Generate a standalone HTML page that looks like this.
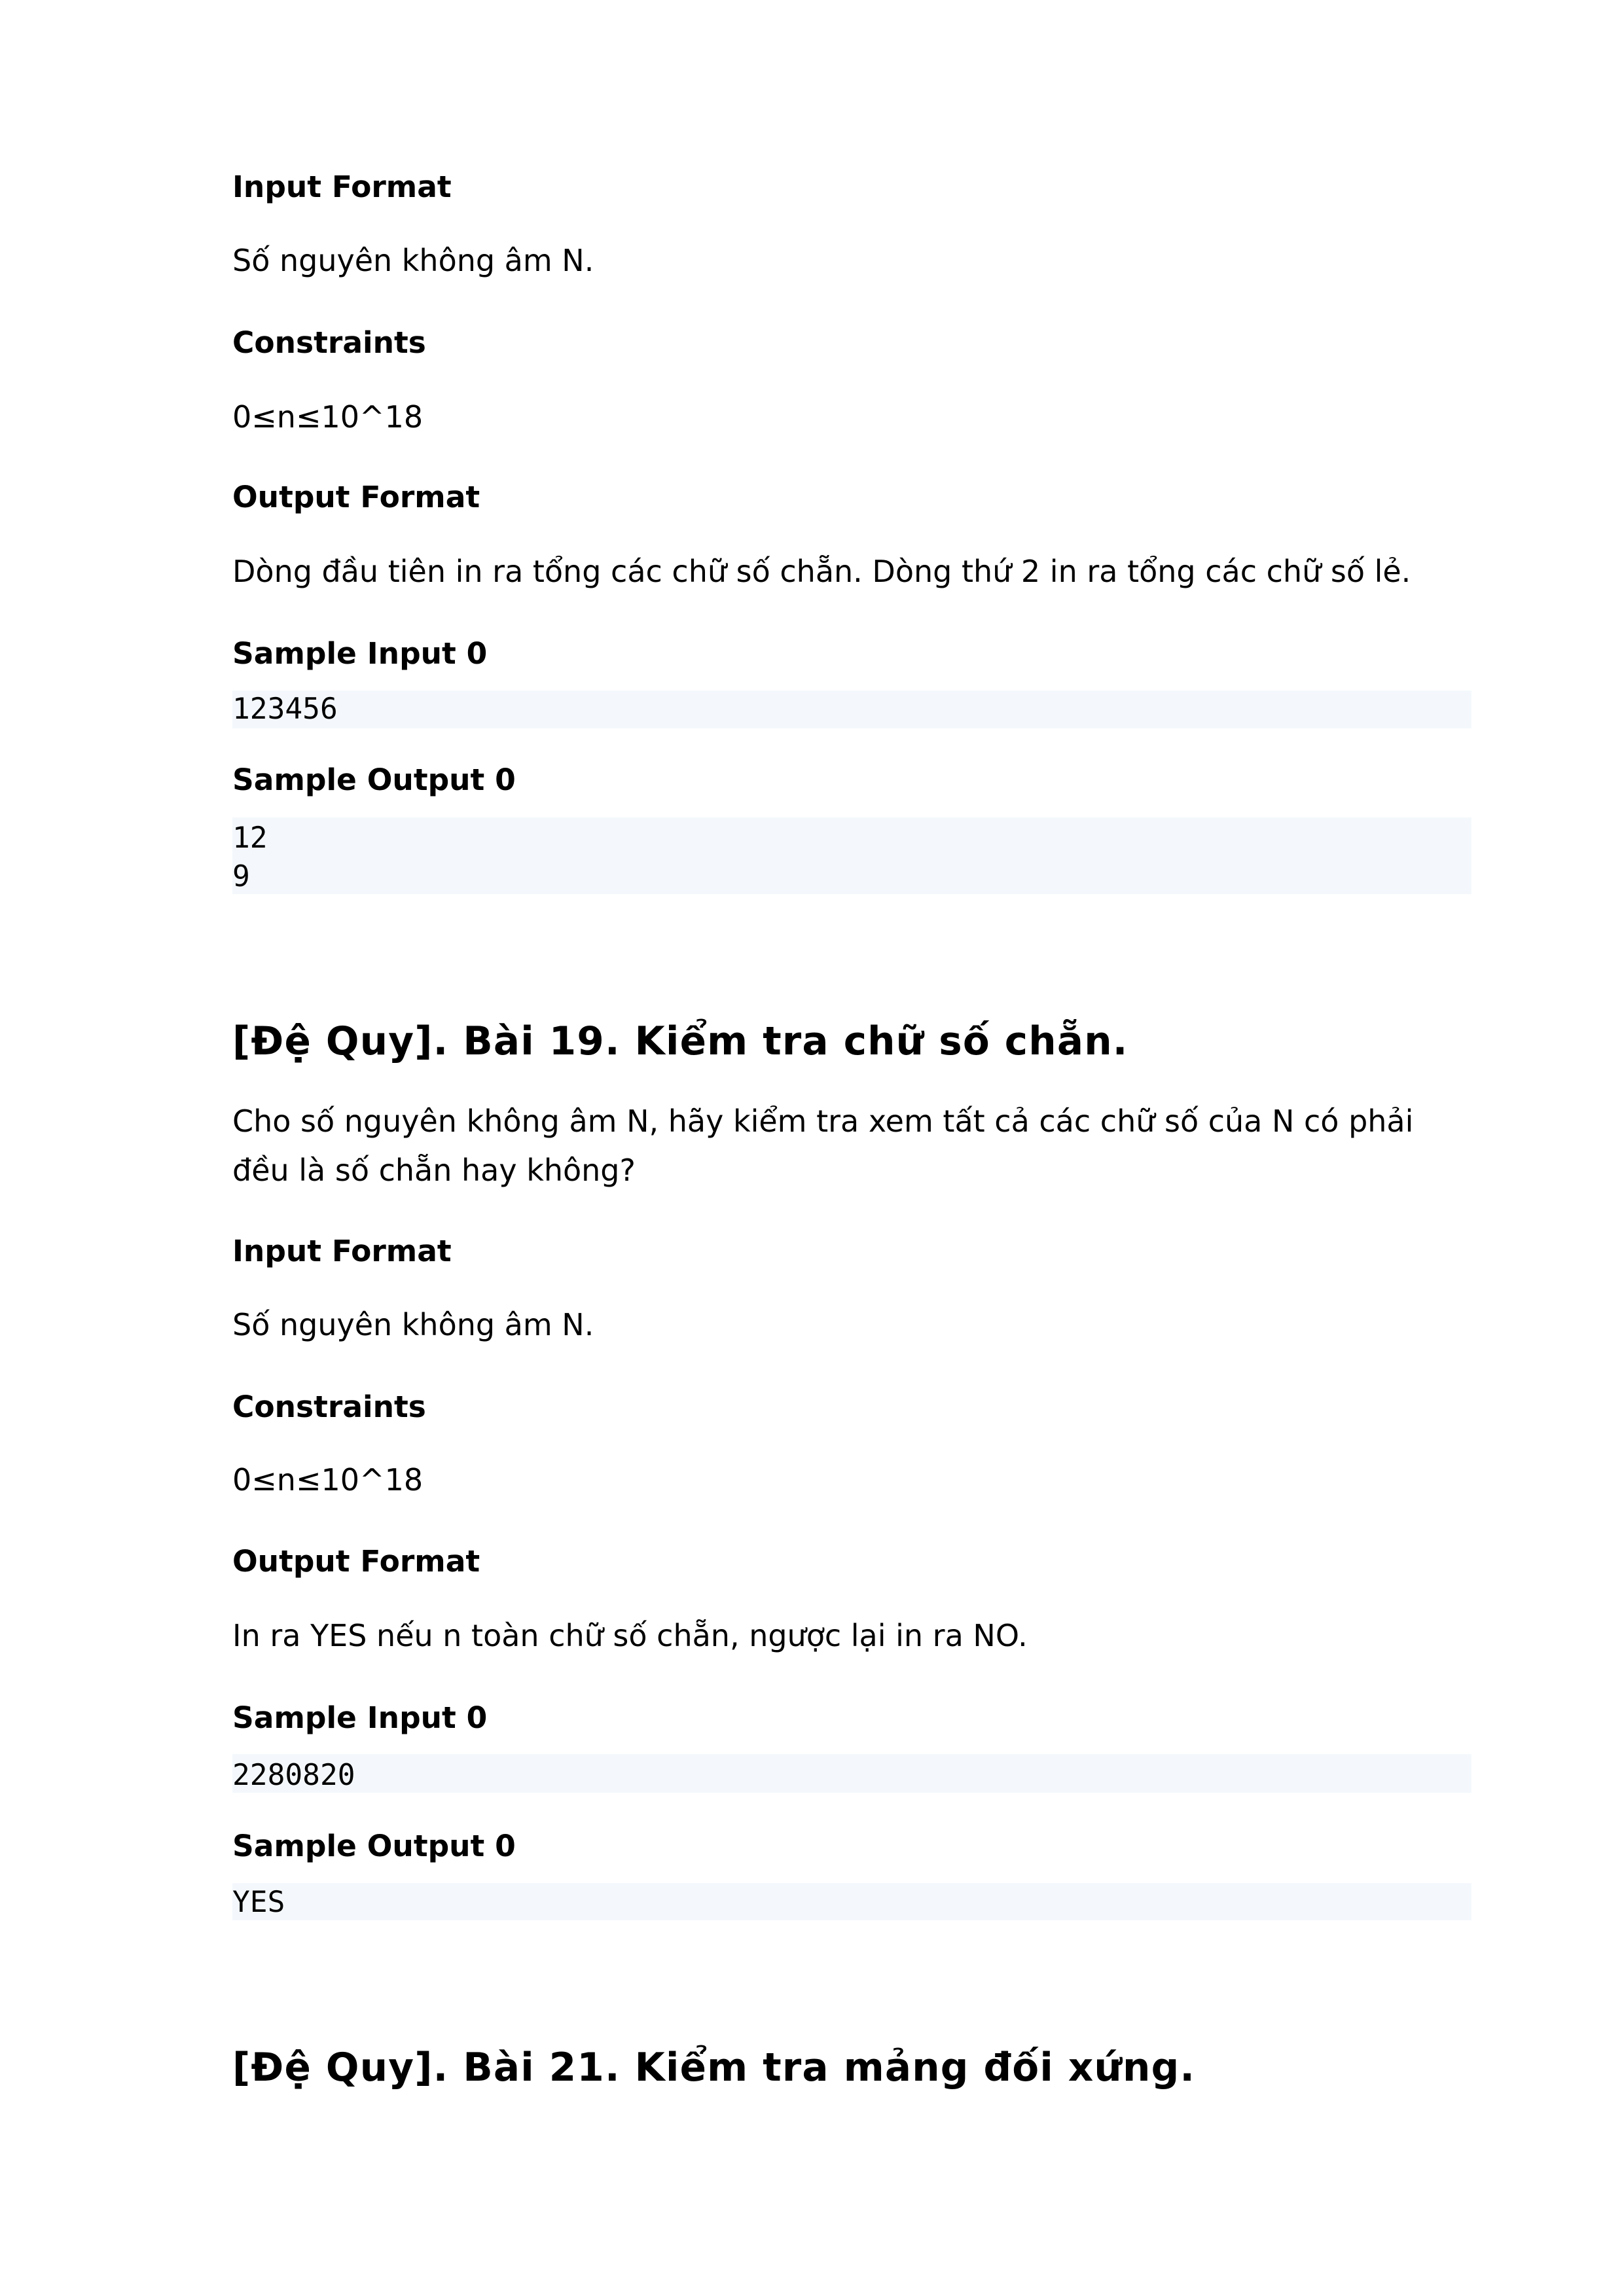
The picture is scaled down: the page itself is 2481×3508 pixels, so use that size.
<!DOCTYPE html>
<html><head><meta charset="utf-8"><style>
html,body{margin:0;padding:0;background:#fff;}
body{width:2481px;height:3508px;position:relative;overflow:hidden;font-family:"DejaVu Sans","Liberation Sans",sans-serif;color:#000;}
.t{position:absolute;left:355px;font-size:46px;line-height:60px;white-space:nowrap;}
.b{font-weight:bold;font-size:45.5px;}
.h2{position:absolute;left:355px;font-size:59.5px;line-height:78px;font-weight:bold;white-space:nowrap;letter-spacing:1.2px;}
.box{position:absolute;left:355px;width:1893px;background:#f4f8fc;}
.m{position:absolute;left:355px;font-family:"DejaVu Sans Mono","Liberation Mono",monospace;font-size:44.5px;line-height:59px;white-space:nowrap;}
</style></head><body>
<div class="t b" style="top:256px">Input Format</div>
<div class="t" style="top:368px">Số nguyên không âm N.</div>
<div class="t b" style="top:494px">Constraints</div>
<div class="t" style="top:607px">0≤n≤10^18</div>
<div class="t b" style="top:730px">Output Format</div>
<div class="t" style="top:843px">Dòng đầu tiên in ra tổng các chữ số chẵn. Dòng thứ 2 in ra tổng các chữ số lẻ.</div>
<div class="t b" style="top:969px">Sample Input 0</div>
<div class="box" style="top:1055px;height:58px"></div>
<div class="m" style="top:1054px">123456</div>
<div class="t b" style="top:1162px">Sample Output 0</div>
<div class="box" style="top:1249px;height:117px"></div>
<div class="m" style="top:1251px">12<br>9</div>
<div class="h2" style="top:1553px">[Đệ Quy]. Bài 19. Kiểm tra chữ số chẵn.</div>
<div class="t" style="top:1676px;line-height:75px">Cho số nguyên không âm N, hãy kiểm tra xem tất cả các chữ số của N có phải<br>đều là số chẵn hay không?</div>
<div class="t b" style="top:1882px">Input Format</div>
<div class="t" style="top:1994px">Số nguyên không âm N.</div>
<div class="t b" style="top:2120px">Constraints</div>
<div class="t" style="top:2231px">0≤n≤10^18</div>
<div class="t b" style="top:2356px">Output Format</div>
<div class="t" style="top:2469px">In ra YES nếu n toàn chữ số chẵn, ngược lại in ra NO.</div>
<div class="t b" style="top:2595px">Sample Input 0</div>
<div class="box" style="top:2680px;height:59px"></div>
<div class="m" style="top:2683px">2280820</div>
<div class="t b" style="top:2791px">Sample Output 0</div>
<div class="box" style="top:2877px;height:57px"></div>
<div class="m" style="top:2877px">YES</div>
<div class="h2" style="top:3121px">[Đệ Quy]. Bài 21. Kiểm tra mảng đối xứng.</div>
</body></html>
